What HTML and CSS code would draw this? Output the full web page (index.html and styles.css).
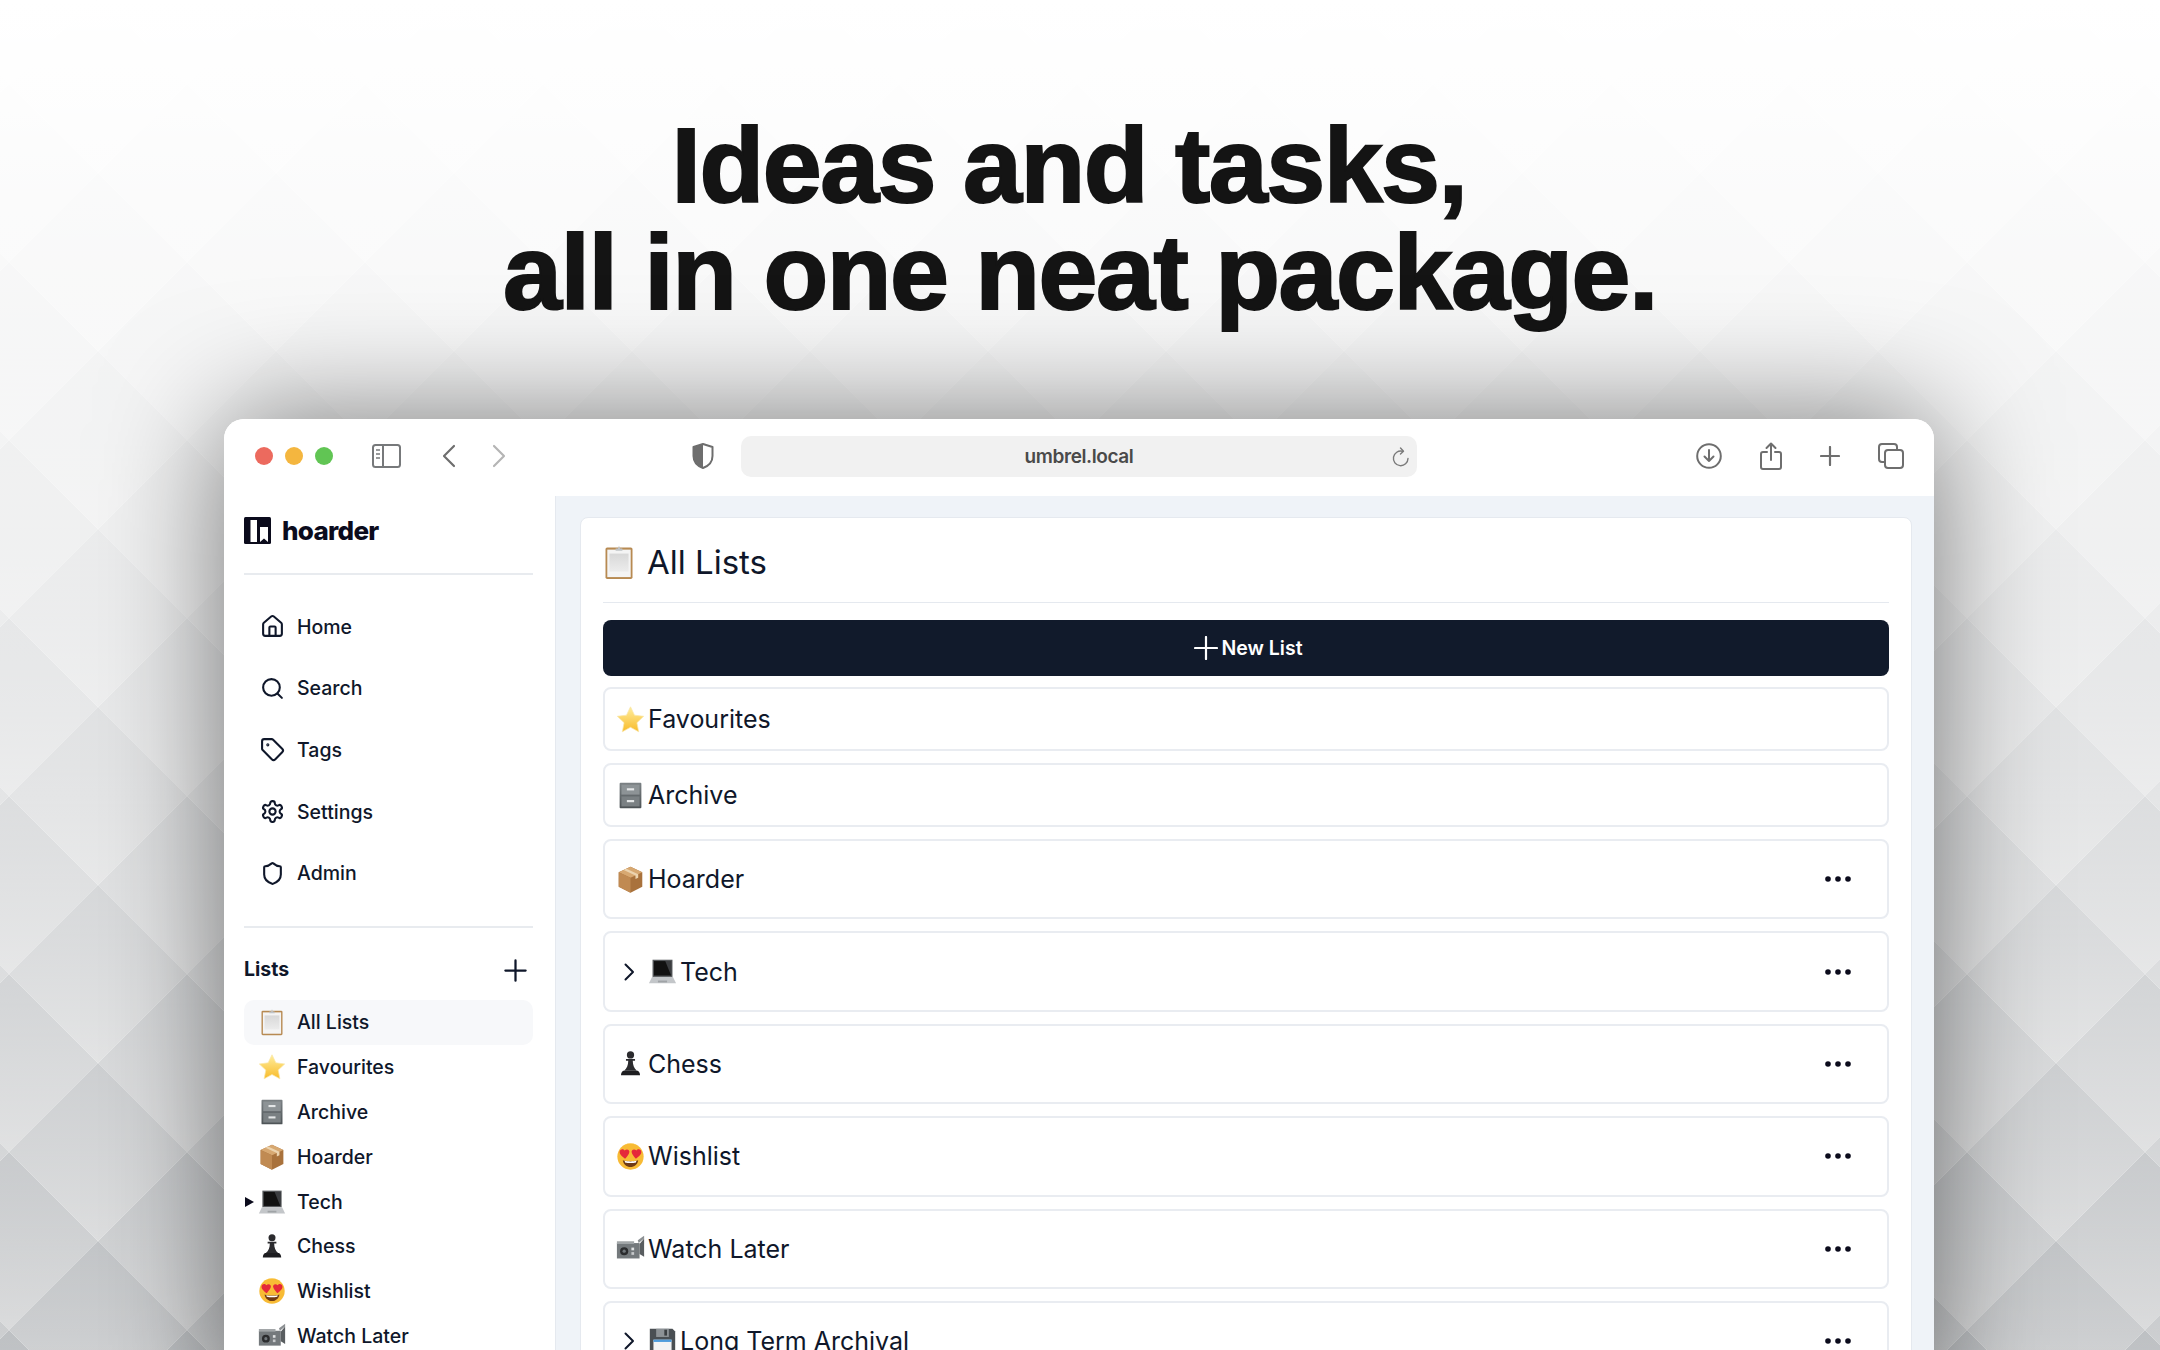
FILE: index.html
```html
<!DOCTYPE html>
<html lang="en">
<head>
    <meta charset="UTF-8" />
    <title>Hoarder - Ideas and tasks</title>
    <link rel="stylesheet" href="styles.css">
</head>
<body>
<svg width="0" height="0" class="defs">
    <defs>
        <linearGradient id="g-star" x1="0" y1="0" x2="0" y2="1"><stop offset="0" stop-color="#ffee9e"/><stop offset="1" stop-color="#f8bb2a"/></linearGradient>
        <linearGradient id="g-steel" x1="0" y1="0" x2="0" y2="1"><stop offset="0" stop-color="#7b8184"/><stop offset="1" stop-color="#4d5356"/></linearGradient>
        <linearGradient id="g-paper" x1="0" y1="0" x2="0" y2="1"><stop offset="0" stop-color="#d8d8d8"/><stop offset="1" stop-color="#ececec"/></linearGradient>
    </defs>
    <symbol id="e-clipboard" viewBox="0 0 32 32">
        <rect x="4" y="3" width="24" height="28" rx="1.5" fill="#b78a52"/>
        <rect x="5.600" y="5" width="20.800" height="24.400" fill="#f4f4f4"/>
        <rect x="7.500" y="8.500" width="17" height="16" fill="url(#g-paper)"/>
        <path d="M13 4h2l1-2.500L17 4h2v2h-6z" fill="#bfc3c6"/>
    </symbol>
    <symbol id="e-star" viewBox="0 0 32 32">
        <path d="M16 2l4.400 9.200 10.100 1.300-7.400 7 1.900 10-9-4.900-9 4.900 1.900-10-7.400-7 10.100-1.300z" fill="url(#g-star)" stroke="#f9e6a6" stroke-width=".8" stroke-linejoin="round"/>
    </symbol>
    <symbol id="e-cabinet" viewBox="0 0 32 32">
        <rect x="4" y="2" width="24" height="28" rx="1" fill="url(#g-steel)"/>
        <rect x="6" y="4" width="20" height="11" fill="#8d9396"/>
        <rect x="6" y="17" width="20" height="11" fill="#7a8083"/>
        <rect x="12" y="8" width="8" height="2.400" fill="#e4e6e7"/>
        <rect x="12" y="21" width="8" height="2.400" fill="#e4e6e7"/>
    </symbol>
    <symbol id="e-package" viewBox="0 0 32 32">
        <path d="M16 2L29 8v16l-13 6.500L3 24V8z" fill="#a9723c"/>
        <path d="M16 2L29 8l-13 6L3 8z" fill="#d7a871"/>
        <path d="M3 8l13 6v16.500L3 24z" fill="#c08a52"/>
        <path d="M8.500 5.400l13 6.100v4l3-1.400v-4l-13-6z" fill="#ecd3ae"/>
    </symbol>
    <symbol id="e-laptop" viewBox="0 0 32 32">
        <path d="M5 3h22v19H5z" fill="#55585b"/>
        <path d="M6.500 4.500h19v16h-19z" fill="#111"/>
        <path d="M19 4.500h6.500v16z" fill="#3b3d40"/>
        <path d="M4.500 22h23L31 29H1z" fill="#c3c6c9"/>
        <rect x="11" y="26" width="10" height="2" fill="#9fa3a6"/>
    </symbol>
    <symbol id="e-pawn" viewBox="0 0 32 32">
        <circle cx="16" cy="6.500" r="4" fill="#2b2b2e"/>
        <path d="M11 11h10v2h-2.500c0 5 1.500 8 4.500 11H9c3-3 4.500-6 4.500-11H11z" fill="#2b2b2e"/>
        <path d="M8 24h16c1.500 1 2.500 2.500 2.500 5h-21c0-2.500 1-4 2.500-5z" fill="#1d1d20"/>
    </symbol>
    <symbol id="e-hearts" viewBox="0 0 32 32">
        <circle cx="16" cy="16" r="14.500" fill="#f8bb35"/>
        <path d="M9 3.500a14.500 14.500 0 0 1 14 0A13 13 0 0 0 9 3.500z" fill="#fde289"/>
        <path d="M10 18.500c-2.500-2-6-4.500-6-7.500 0-3 4-4 5.500-1.500C11.500 7 16 8.500 14.500 12c-.8 2-2.700 4.500-4.500 6.500z" fill="#e5283a"/>
        <path d="M22 18.500c2.500-2 6-4.500 6-7.500 0-3-4-4-5.500-1.500C20.500 7 16 8.500 17.500 12c.8 2 2.700 4.500 4.500 6.500z" fill="#e5283a"/>
        <path d="M7.500 20c4 1.700 13 1.700 17 0-.8 4.800-4.300 7.500-8.500 7.500s-7.700-2.700-8.500-7.500z" fill="#6f3a14"/>
        <path d="M9.500 20.800c3.500.8 9.500.8 13 0l-.5 1.700c-3.500.8-8.500.8-12 0z" fill="#fff"/>
    </symbol>
    <symbol id="e-camera" viewBox="0 0 32 32">
        <path d="M1 10h25v17H1z" fill="#74797c"/>
        <path d="M26 11l5-6v20l-5-3z" fill="#595d60"/>
        <path d="M24 7l7-5v3l-6 5z" fill="#8c9093"/>
        <rect x="1" y="8" width="19" height="3" fill="#a2a6a8"/>
        <circle cx="9" cy="19" r="4.500" fill="#2b2c2e"/>
        <circle cx="9" cy="19" r="1.800" fill="#70767a"/>
        <rect x="17" y="15" width="3" height="3" fill="#dfe1e2"/>
        <rect x="17" y="20" width="3" height="3" fill="#c7c9cb"/>
    </symbol>
    <symbol id="e-floppy" viewBox="0 0 32 32">
        <path d="M2 2h25l3 3v25H2z" fill="#4a4f53"/>
        <rect x="9" y="2" width="14" height="9" fill="#8d9296"/>
        <rect x="18" y="3" width="3" height="6.500" fill="#3b3f42"/>
        <rect x="6" y="14" width="20" height="16" fill="#f1f3f4"/>
        <rect x="6" y="14" width="20" height="2.500" fill="#4e9cdc"/>
    </symbol>
    <symbol id="i-dots" viewBox="0 0 30 30">
        <circle cx="5" cy="15" r="2.800"/>
        <circle cx="15" cy="15" r="2.800"/>
        <circle cx="25" cy="15" r="2.800"/>
    </symbol>
    <symbol id="i-chevron" viewBox="0 0 26 26">
        <path d="M9.500 5.500L17 13l-7.500 7.500" fill="none" stroke="currentColor" stroke-width="2" stroke-linecap="round" stroke-linejoin="round"/>
    </symbol>
</svg>

<div class="page">
    <svg class="backdrop" width="2160" height="1350">
        <defs>
            <linearGradient id="g-tile" x1="0" y1="0" x2="0" y2="1">
                <stop offset="0" stop-color="#b9bcbf"/>
                <stop offset="1" stop-color="#d8d9da"/>
            </linearGradient>
            <linearGradient id="g-fade" x1="0" y1="0" x2="0" y2="1">
                <stop offset="0" stop-color="#fff" stop-opacity="1"/>
                <stop offset=".08" stop-color="#fff" stop-opacity=".97"/>
                <stop offset=".22" stop-color="#fff" stop-opacity=".87"/>
                <stop offset=".37" stop-color="#fff" stop-opacity=".75"/>
                <stop offset=".65" stop-color="#fff" stop-opacity=".44"/>
                <stop offset=".79" stop-color="#fff" stop-opacity=".3"/>
                <stop offset="1" stop-color="#fff" stop-opacity=".05"/>
            </linearGradient>
            <pattern id="diamonds" x="9" y="885" width="178" height="178" patternUnits="userSpaceOnUse">
                <polygon points="0,-89 89,0 0,89 -89,0" fill="url(#g-tile)"/>
                <polygon points="178,-89 267,0 178,89 89,0" fill="url(#g-tile)"/>
                <polygon points="0,89 89,178 0,267 -89,178" fill="url(#g-tile)"/>
                <polygon points="178,89 267,178 178,267 89,178" fill="url(#g-tile)"/>
                <polygon points="89,0 178,89 89,178 0,89" fill="url(#g-tile)"/>
            </pattern>
        </defs>
        <rect width="2160" height="1350" fill="url(#diamonds)"/>
        <rect width="2160" height="1350" fill="url(#g-fade)"/>
    </svg>

    <h1 class="headline"><span class="headline-first">Ideas and tasks,</span><br>all in one neat package.</h1>

    <div class="window">
        <div class="toolbar">
            <div class="lights">
                <span class="light red"></span>
                <span class="light yellow"></span>
                <span class="light green"></span>
            </div>
            <svg class="tb-sidebar" width="29" height="24" viewBox="0 0 29 24" fill="none" stroke="#77797b" stroke-width="2">
                <rect x="1" y="1" width="27" height="22" rx="2.500"/>
                <path d="M11 1v22"/>
                <path d="M4 6h4M4 10h4M4 14h4" stroke-width="1.500"/>
            </svg>
            <svg class="tb-back" width="14" height="24" viewBox="0 0 14 24" fill="none" stroke="#6e6e6e" stroke-width="2.200" stroke-linecap="round" stroke-linejoin="round"><path d="M12 2L2 12l10 10"/></svg>
            <svg class="tb-forward" width="14" height="24" viewBox="0 0 14 24" fill="none" stroke="#b5b5b5" stroke-width="2.200" stroke-linecap="round" stroke-linejoin="round"><path d="M2 2l10 10L2 22"/></svg>
            <svg class="tb-shield" width="22" height="26" viewBox="0 0 22 26">
                <path d="M11 1l9.500 3v9c0 6-4 10-9.500 12C5.500 23 1.500 19 1.500 13V4z" fill="#fff" stroke="#6e6e6e" stroke-width="2" stroke-linejoin="round"/>
                <path d="M11 1L1.500 4v9c0 6 4 10 9.500 12z" fill="#6e6e6e"/>
            </svg>
            <div class="address">
                <span class="address-text">umbrel.local</span>
                <svg class="reload" width="18" height="20" viewBox="0 0 18 20" fill="none" stroke="#7a7a7a" stroke-width="1.400" stroke-linecap="round" stroke-linejoin="round">
                    <path d="M10.500 4.300A7.300 7.300 0 1 0 16 11.500"/>
                    <path d="M8.500 1l3 3.300-3 2.700"/>
                </svg>
            </div>
            <div class="tb-right">
                <svg width="26" height="26" viewBox="0 0 26 26" fill="none" stroke="#6e6e6e" stroke-width="2" stroke-linecap="round" stroke-linejoin="round">
                    <circle cx="13" cy="13" r="11.800"/>
                    <path d="M13 7v11M8.500 13.500L13 18l4.500-4.500"/>
                </svg>
                <svg width="22" height="28" viewBox="0 0 22 28" fill="none" stroke="#6e6e6e" stroke-width="2" stroke-linecap="round" stroke-linejoin="round">
                    <path d="M7 10H3a2 2 0 0 0-2 2v13a2 2 0 0 0 2 2h16a2 2 0 0 0 2-2V12a2 2 0 0 0-2-2h-4"/>
                    <path d="M11 18V1.500M6.500 6L11 1.500 15.500 6"/>
                </svg>
                <svg width="20" height="20" viewBox="0 0 20 20" fill="none" stroke="#6e6e6e" stroke-width="2.200" stroke-linecap="round"><path d="M10 1v18M1 10h18"/></svg>
                <svg width="26" height="26" viewBox="0 0 26 26" fill="none" stroke="#6e6e6e" stroke-width="2" stroke-linejoin="round">
                    <rect x="7" y="7" width="18" height="18" rx="3"/>
                    <path d="M7 19H4a3 3 0 0 1-3-3V4a3 3 0 0 1 3-3h12a3 3 0 0 1 3 3v3"/>
                </svg>
            </div>
        </div>

        <div class="app">
            <aside class="sidebar">
                <div class="brand">
                    <svg width="27" height="27" viewBox="0 0 27 27">
                        <rect width="27" height="27" rx="1.500" fill="#0b0b1c"/>
                        <rect x="6.500" y="3" width="6.500" height="22" fill="#fff"/>
                        <path d="M16 10h8v15l-4-3.500-4 3.500z" fill="#fff"/>
                    </svg>
                    <span class="brand-name">hoarder</span>
                </div>
                <nav class="nav">
                    <a class="nav-item">
                        <svg class="lucide" viewBox="0 0 24 24"><path d="M15 21v-8a1 1 0 0 0-1-1h-4a1 1 0 0 0-1 1v8"/><path d="M3 10a2 2 0 0 1 .709-1.528l7-5.999a2 2 0 0 1 2.582 0l7 5.999A2 2 0 0 1 21 10v9a2 2 0 0 1-2 2H5a2 2 0 0 1-2-2z"/></svg>
                        Home
                    </a>
                    <a class="nav-item">
                        <svg class="lucide" viewBox="0 0 24 24"><circle cx="11" cy="11" r="8"/><path d="m21 21-4.300-4.300"/></svg>
                        Search
                    </a>
                    <a class="nav-item">
                        <svg class="lucide" viewBox="0 0 24 24"><path d="M12.586 2.586A2 2 0 0 0 11.172 2H4a2 2 0 0 0-2 2v7.172a2 2 0 0 0 .586 1.414l8.704 8.704a2.426 2.426 0 0 0 3.420 0l6.580-6.580a2.426 2.426 0 0 0 0-3.420z"/><circle cx="7.500" cy="7.500" r=".5" fill="currentColor"/></svg>
                        Tags
                    </a>
                    <a class="nav-item">
                        <svg class="lucide" viewBox="0 0 24 24"><path d="M12.220 2h-.44a2 2 0 0 0-2 2v.18a2 2 0 0 1-1 1.730l-.43.25a2 2 0 0 1-2 0l-.15-.08a2 2 0 0 0-2.730.73l-.22.38a2 2 0 0 0 .73 2.730l.15.1a2 2 0 0 1 1 1.720v.51a2 2 0 0 1-1 1.740l-.15.09a2 2 0 0 0-.73 2.730l.22.38a2 2 0 0 0 2.730.73l.15-.08a2 2 0 0 1 2 0l.43.25a2 2 0 0 1 1 1.730V20a2 2 0 0 0 2 2h.44a2 2 0 0 0 2-2v-.18a2 2 0 0 1 1-1.730l.43-.25a2 2 0 0 1 2 0l.15.08a2 2 0 0 0 2.730-.73l.22-.39a2 2 0 0 0-.73-2.730l-.15-.08a2 2 0 0 1-1-1.740v-.5a2 2 0 0 1 1-1.740l.15-.09a2 2 0 0 0 .73-2.730l-.22-.38a2 2 0 0 0-2.730-.73l-.15.08a2 2 0 0 1-2 0l-.43-.25a2 2 0 0 1-1-1.730V4a2 2 0 0 0-2-2z"/><circle cx="12" cy="12" r="3"/></svg>
                        Settings
                    </a>
                    <a class="nav-item">
                        <svg class="lucide" viewBox="0 0 24 24"><path d="M20 13c0 5-3.500 7.500-7.660 8.950a1 1 0 0 1-.67-.01C7.500 20.500 4 18 4 13V6a1 1 0 0 1 1-1c2 0 4.500-1.200 6.240-2.720a1.170 1.170 0 0 1 1.520 0C14.510 3.810 17 5 19 5a1 1 0 0 1 1 1z"/></svg>
                        Admin
                    </a>
                </nav>
                <div class="lists-head">
                    <span>Lists</span>
                    <svg class="lucide" viewBox="0 0 24 24"><path d="M3 12h18M12 3v18"/></svg>
                </div>
                <ul class="side-lists">
                    <li class="side-item active"><svg class="emoji"><use href="#e-clipboard"/></svg>All Lists</li>
                    <li class="side-item"><svg class="emoji"><use href="#e-star"/></svg>Favourites</li>
                    <li class="side-item"><svg class="emoji"><use href="#e-cabinet"/></svg>Archive</li>
                    <li class="side-item"><svg class="emoji"><use href="#e-package"/></svg>Hoarder</li>
                    <li class="side-item"><span class="caret"></span><svg class="emoji"><use href="#e-laptop"/></svg>Tech</li>
                    <li class="side-item"><svg class="emoji"><use href="#e-pawn"/></svg>Chess</li>
                    <li class="side-item"><svg class="emoji"><use href="#e-hearts"/></svg>Wishlist</li>
                    <li class="side-item"><svg class="emoji"><use href="#e-camera"/></svg>Watch Later</li>
                </ul>
            </aside>

            <main class="main">
                <section class="card">
                    <h2 class="card-title"><svg class="emoji-lg"><use href="#e-clipboard"/></svg>All Lists</h2>
                    <button class="new-list">
                        <svg width="24" height="24" viewBox="0 0 24 24" fill="none" stroke="#fff" stroke-width="2.200" stroke-linecap="round"><path d="M12 1v22M1 12h22"/></svg>
                        New List
                    </button>
                    <div class="rows">
                        <div class="row row-short"><svg class="emoji-md"><use href="#e-star"/></svg>Favourites</div>
                        <div class="row row-short"><svg class="emoji-md"><use href="#e-cabinet"/></svg>Archive</div>
                        <div class="row"><svg class="emoji-md"><use href="#e-package"/></svg>Hoarder<svg class="dots"><use href="#i-dots"/></svg></div>
                        <div class="row"><svg class="chevron"><use href="#i-chevron"/></svg><svg class="emoji-md"><use href="#e-laptop"/></svg>Tech<svg class="dots"><use href="#i-dots"/></svg></div>
                        <div class="row"><svg class="emoji-md"><use href="#e-pawn"/></svg>Chess<svg class="dots"><use href="#i-dots"/></svg></div>
                        <div class="row"><svg class="emoji-md"><use href="#e-hearts"/></svg>Wishlist<svg class="dots"><use href="#i-dots"/></svg></div>
                        <div class="row"><svg class="emoji-md"><use href="#e-camera"/></svg>Watch Later<svg class="dots"><use href="#i-dots"/></svg></div>
                        <div class="row"><svg class="chevron"><use href="#i-chevron"/></svg><svg class="emoji-md"><use href="#e-floppy"/></svg>Long Term Archival<svg class="dots"><use href="#i-dots"/></svg></div>
                    </div>
                </section>
            </main>
        </div>
    </div>
</div>
</body>
</html>
```

FILE: styles.css
```css
* {
    box-sizing: border-box;
}
html, body {
    margin: 0;
    padding: 0;
}
body {
    font-family: Inter, "Noto Sans", sans-serif;
    color: #0f172a;
    background: #fff;
}
.defs {
    position: absolute;
}
.page {
    position: relative;
    width: 2160px;
    height: 1350px;
    overflow: hidden;
}
.backdrop {
    position: absolute;
    left: 0;
    top: 0;
}

/* headline */
.headline {
    position: relative;
    margin: 0;
    padding-top: 112px;
    height: 419px;
    font-family: "Liberation Sans", Arial, sans-serif;
    font-size: 106px;
    font-weight: 700;
    line-height: 107px;
    letter-spacing: -1.500px;
    text-align: center;
    color: #141414;
    -webkit-text-stroke: 2px #141414;
}
.headline-first {
    margin-right: 22px;
}

/* browser window */
.window {
    position: relative;
    width: 1710px;
    height: 1000px;
    margin-left: 224px;
    background: #fff;
    border-radius: 20px 20px 0 0;
    box-shadow: 0 0 120px rgba(0, 0, 0, .5);
    overflow: hidden;
}
.toolbar {
    display: flex;
    align-items: center;
    height: 77px;
    padding-left: 31px;
    padding-bottom: 3px;
    background: #fff;
}
.lights {
    display: flex;
    gap: 12px;
}
.light {
    width: 18px;
    height: 18px;
    border-radius: 50%;
}
.red { background: #ec6a5e; }
.yellow { background: #f4b63f; }
.green { background: #61c554; }
.tb-sidebar { margin-left: 39px; }
.tb-back { margin-left: 41px; }
.tb-forward { margin-left: 36px; }
.tb-shield { margin-left: 186px; }
.address {
    position: relative;
    display: flex;
    align-items: center;
    justify-content: center;
    width: 676px;
    height: 41px;
    margin-left: 27px;
    background: #f1f1f1;
    border-radius: 10px;
}
.address-text {
    font-size: 19px;
    font-weight: 600;
    letter-spacing: -.4px;
    color: #4a4a4a;
}
.reload {
    position: absolute;
    right: 7px;
    top: 11px;
}
.tb-right {
    display: flex;
    align-items: center;
    gap: 38px;
    margin-left: 279px;
}

/* app layout */
.app {
    display: flex;
    height: 923px;
}
.sidebar {
    width: 332px;
    padding: 21px 22px 0 20px;
    background: #fff;
    border-right: 1px solid #e5e9ef;
}
.brand {
    display: flex;
    align-items: center;
    gap: 11px;
    padding-bottom: 29px;
    border-bottom: 2px solid #e8ebef;
    box-sizing: content-box;
    height: 27px;
}
.brand-name {
    font-size: 26px;
    font-weight: 800;
    letter-spacing: -.7px;
    color: #0b0b1c;
}
.nav {
    display: flex;
    flex-direction: column;
    padding: 21px 0 22px;
    border-bottom: 2px solid #e8ebef;
}
.nav-item {
    display: flex;
    align-items: center;
    gap: 12px;
    height: 61.600px;
    padding-left: 16px;
    font-size: 19.500px;
    font-weight: 500;
}
.lucide {
    width: 25px;
    height: 25px;
    fill: none;
    stroke: currentColor;
    stroke-width: 2;
    stroke-linecap: round;
    stroke-linejoin: round;
    flex: none;
}
.lists-head {
    display: flex;
    align-items: center;
    justify-content: space-between;
    height: 72px;
    padding-top: 10px;
    padding-right: 4px;
    font-size: 19.500px;
    font-weight: 700;
}
.lists-head .lucide {
    width: 27px;
    height: 27px;
    margin-top: 4px;
}
.side-lists {
    list-style: none;
    margin: 0;
    padding: 0;
}
.side-item {
    position: relative;
    display: flex;
    align-items: center;
    gap: 11px;
    height: 44.800px;
    padding-left: 14px;
    font-size: 19.500px;
    font-weight: 500;
    border-radius: 10px;
}
.side-item.active {
    background: #f7f8fa;
}
.caret {
    position: absolute;
    left: 1px;
    top: 18px;
    border-left: 9px solid #0b0b1c;
    border-top: 5px solid transparent;
    border-bottom: 5px solid transparent;
}
.emoji {
    width: 28px;
    height: 28px;
    flex: none;
}

/* main panel */
.main {
    flex: 1;
    padding: 21px 22px 0 24px;
    background: #eff3f8;
}
.card {
    height: 900px;
    padding: 0 22px;
    background: #fff;
    border: 1px solid #e5e9ef;
    border-radius: 8px;
}
.card-title {
    display: flex;
    align-items: center;
    gap: 10px;
    height: 85px;
    margin: 0;
    padding-top: 4px;
    font-size: 33px;
    font-weight: 400;
    border-bottom: 1px solid #e5e9ef;
}
.emoji-lg {
    width: 36px;
    height: 36px;
    margin-left: -2px;
    flex: none;
}
.new-list {
    display: flex;
    align-items: center;
    justify-content: center;
    gap: 3px;
    width: 100%;
    height: 56px;
    margin-top: 17px;
    padding: 0 0 0 5px;
    font-family: inherit;
    font-size: 19.500px;
    font-weight: 600;
    color: #fff;
    background: #111a2b;
    border: 0;
    border-radius: 8px;
}
.rows {
    display: flex;
    flex-direction: column;
    gap: 12px;
    margin-top: 11px;
}
.row {
    display: flex;
    flex: none;
    align-items: center;
    gap: 3px;
    height: 80.400px;
    padding-left: 11px;
    padding-right: 34px;
    font-size: 25px;
    border: 2px solid #e9ecf1;
    border-radius: 8px;
}
.row-short {
    height: 64px;
}
.emoji-md {
    width: 29px;
    height: 29px;
    flex: none;
}
.chevron {
    width: 26px;
    height: 26px;
    margin-right: 3px;
    flex: none;
    color: #0f172a;
}
.dots {
    width: 30px;
    height: 30px;
    margin-left: auto;
    fill: #0b0b1c;
}
```
